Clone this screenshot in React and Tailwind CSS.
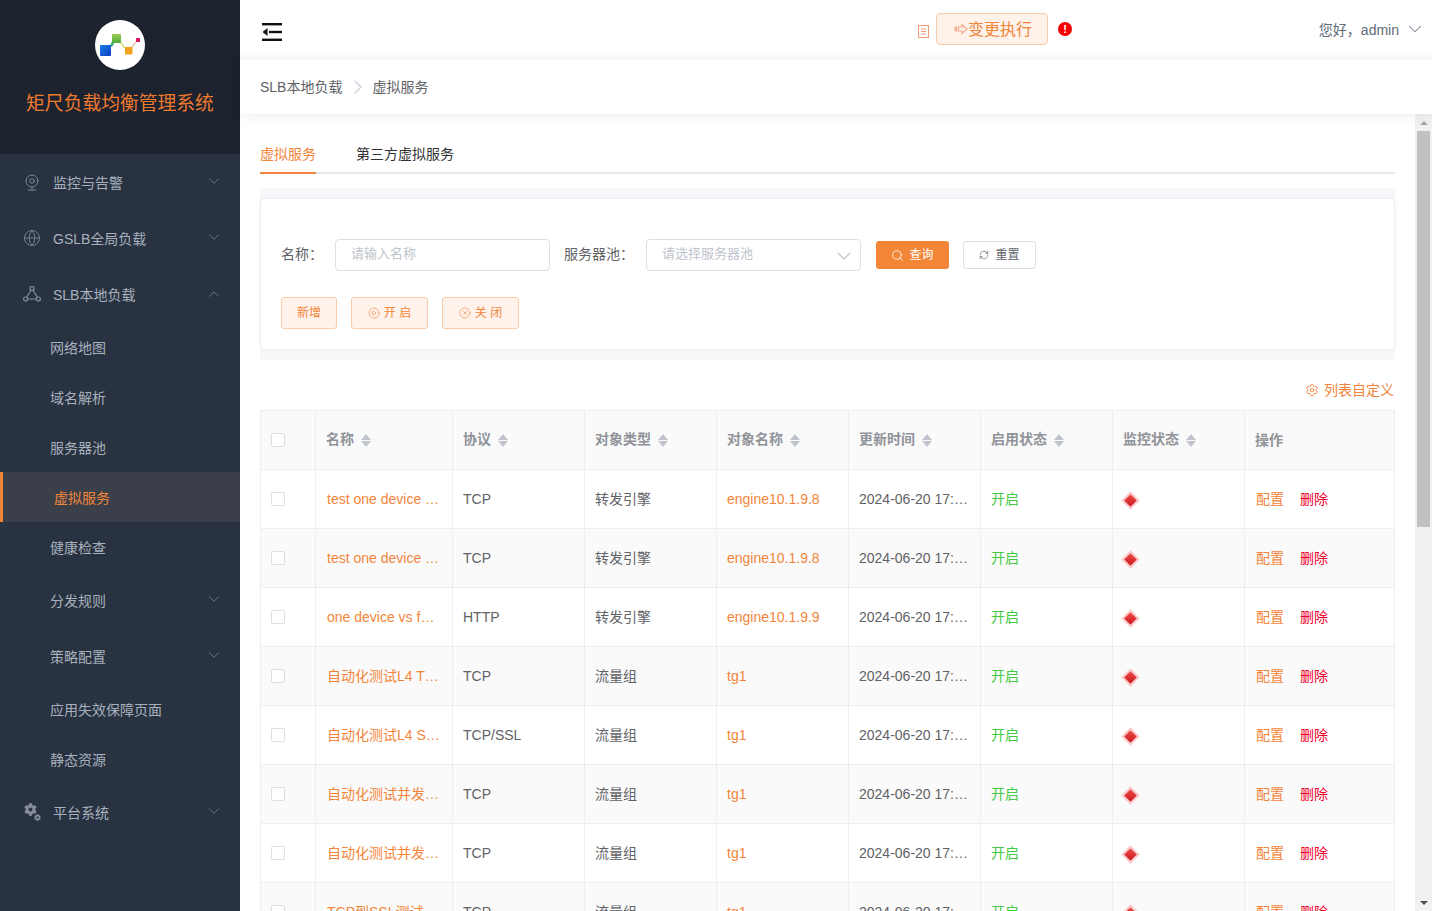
import React from "react";
import { ChevronDown, ChevronUp, ChevronRight, Globe, Webcam, Search, RefreshCw, CirclePlay, CircleX, Settings } from "lucide-react";
import { FaCog } from "react-icons/fa";

const FONT = "font-['Liberation_Sans','Noto_Sans_CJK_SC',sans-serif]";

const rows = [
  ["test one device vs f5 test", "TCP", "转发引擎", "engine10.1.9.8"],
  ["test one device vs f5 test", "TCP", "转发引擎", "engine10.1.9.8"],
  ["one device vs fw http test", "HTTP", "转发引擎", "engine10.1.9.9"],
  ["自动化测试L4 TCP虚拟服务", "TCP", "流量组", "tg1"],
  ["自动化测试L4 SSL虚拟服务", "TCP/SSL", "流量组", "tg1"],
  ["自动化测试并发连接虚拟服务", "TCP", "流量组", "tg1"],
  ["自动化测试并发连接虚拟服务二", "TCP", "流量组", "tg1"],
  ["TCP到SSL测试", "TCP", "流量组", "tg1"],
];

const columns = ["名称", "协议", "对象类型", "对象名称", "更新时间", "启用状态", "监控状态"];

const Logo = () => (
  <svg viewBox="0 0 50 50" className="w-[50px] h-[50px]">
    <defs>
      <linearGradient id="blue" x1="0" y1="0" x2="1" y2="1">
        <stop offset="0" stopColor="#1a7fe8" />
        <stop offset="1" stopColor="#0a3fc4" />
      </linearGradient>
      <linearGradient id="green" x1="0" y1="0" x2="0" y2="1">
        <stop offset="0" stopColor="#9acb55" />
        <stop offset="1" stopColor="#4fae3a" />
      </linearGradient>
    </defs>
    <circle cx="25" cy="25" r="25" fill="#fff" />
    <path d="M14 26 C17 26 17 25 18 22" stroke="#3aa87a" strokeWidth="2.5" fill="none" />
    <path d="M25 22 C27 22 28 28 31 28" stroke="#d8d86a" strokeWidth="1.5" fill="none" />
    <path d="M36 28 L41.5 21.5" stroke="#f3b9a0" strokeWidth="1.2" fill="none" />
    <rect x="5" y="25" width="11" height="11" rx="1" fill="url(#blue)" />
    <rect x="17" y="14" width="9" height="9" rx="1" fill="url(#green)" />
    <rect x="30" y="27" width="7.5" height="7.5" rx="1" fill="#f2a11c" />
    <rect x="41" y="18" width="4" height="4" fill="#d6175f" />
  </svg>
);

const TriangleNet = () => (
  <svg viewBox="0 0 18 16" className="w-[18px] h-4 fill-none stroke-[#868e9a]" strokeWidth="1.2">
    <circle cx="9" cy="2.4" r="2" />
    <circle cx="2.6" cy="13" r="2" />
    <circle cx="15.4" cy="13" r="2" />
    <path d="M8 4.2 L3.6 11.2 M10 4.2 L14.4 11.2 M4.6 13 H13.4" />
  </svg>
);

const Gears = () => (
  <span className="relative block w-[17px] h-[18px] text-[#868e9a]">
    <FaCog className="absolute left-0 top-0 w-[13px] h-[13px]" />
    <FaCog className="absolute right-0 bottom-0 w-[7px] h-[7px]" />
  </span>
);

const TopItem = ({ icon, label, open }) => (
  <div className="h-14 flex items-center pl-[53px] pr-[17px] relative text-sm text-[#a7b1bd]">
    <span className="absolute left-[23px] top-0 bottom-0 w-[18px] flex items-center justify-center">{icon}</span>
    <span className="flex-1 mt-0.5">{label}</span>
    {open ? (
      <ChevronUp className="w-[18px] h-[18px] text-[#6b7482]" strokeWidth={1.3} />
    ) : (
      <ChevronDown className="w-[18px] h-[18px] text-[#6b7482] -mt-[3px]" strokeWidth={1.3} />
    )}
  </div>
);

const SubItem = ({ label, active }) => (
  <div
    className={
      active
        ? "h-[50px] flex items-center pt-0.5 pl-[51px] text-sm text-[#f2853a] bg-[#3a3f4a] border-l-[3px] border-[#f0853a]"
        : "h-[50px] flex items-center pt-0.5 pl-[50px] text-sm text-[#a7b1bd]"
    }
  >
    {label}
  </div>
);

const Sidebar = () => (
  <aside className="w-[240px] h-full shrink-0 bg-[#293241] overflow-hidden">
    <div className="h-[154px] bg-[#1c222e] flex flex-col items-center pt-5">
      <Logo />
      <div className="mt-[21px] text-[18.8px] leading-[26px] text-[#ef7a2e]">矩尺负载均衡管理系统</div>
    </div>
    <TopItem icon={<Webcam className="w-[19px] h-[19px] text-[#868e9a]" strokeWidth={1.2} />} label="监控与告警" />
    <TopItem icon={<Globe className="w-5 h-5 text-[#868e9a]" strokeWidth={1.1} />} label="GSLB全局负载" />
    <TopItem icon={<TriangleNet />} label="SLB本地负载" open />
    <SubItem label="网络地图" />
    <SubItem label="域名解析" />
    <SubItem label="服务器池" />
    <SubItem label="虚拟服务" active />
    <SubItem label="健康检查" />
    <div className="[&>div]:pl-[50px]">
      <TopItem icon={null} label="分发规则" />
      <TopItem icon={null} label="策略配置" />
    </div>
    <SubItem label="应用失效保障页面" />
    <SubItem label="静态资源" />
    <TopItem icon={<Gears />} label="平台系统" />
  </aside>
);

const MenuFold = () => (
  <svg viewBox="0 0 20 18" className="w-5 h-[18px] mt-1 fill-[#111]">
    <rect x="0" y="0" width="20" height="2.4" />
    <rect x="7" y="7.8" width="13" height="2.4" />
    <rect x="0" y="15.6" width="20" height="2.4" />
    <path d="M5.5 5 V13 L0.5 9 Z" />
  </svg>
);

const ArrowOutline = () => (
  <svg viewBox="0 0 14 12" className="w-[14px] h-3 fill-none stroke-[#f7a98a]" strokeWidth="1.2">
    <path d="M1 4 H2.5 V8 H1 Z M4.5 4 H8 V1.5 L13 6 L8 10.5 V8 H4.5 Z" />
  </svg>
);

const DocIcon = () => (
  <svg viewBox="0 0 11 13" className="w-[11px] h-[13px] mt-1 fill-none stroke-[#f4997a]" strokeWidth="1">
    <rect x="0.5" y="0.5" width="10" height="12" />
    <path d="M3 4 H8 M3 6.5 H8 M3 9 H8" />
  </svg>
);

const Header = () => (
  <header className="h-[60px] shrink-0 bg-white flex items-center pl-[22px] pr-[6px]">
    <MenuFold />
    <div className="ml-[636px] flex items-center -mt-[2px]">
      <DocIcon />
      <div className="ml-[7px] w-[112px] h-8 rounded border border-[#fbcba8] bg-[#fef2ea] flex items-center justify-center pl-0.5 text-base text-[#f2853a]">
        <ArrowOutline />
        <span className="mt-0.5">变更执行</span>
      </div>
      <span className="ml-[10px] w-[14px] h-[14px] rounded-full bg-[#f60000] text-white text-[11px] leading-[14px] font-bold text-center">!</span>
    </div>
    <div className="ml-auto flex items-center text-sm text-[#606a78]">
      <span>您好，admin</span>
      <ChevronDown className="ml-[5px] w-[22px] h-[22px] -mt-[3px] text-[#7a8494]" strokeWidth={1.1} />
    </div>
  </header>
);

const Breadcrumb = () => (
  <div className="relative z-10 h-[54px] shrink-0 bg-white shadow-[0_0_12px_rgba(0,0,0,0.09)] flex items-center pl-5 text-sm text-[#606266]">
    <span>SLB本地负载</span>
    <ChevronRight className="ml-1 mr-0.5 w-6 h-6 text-[#c5cdd8]" strokeWidth={1.2} />
    <span>虚拟服务</span>
  </div>
);

const OutlineButton = ({ icon, children, className }) => (
  <button className={"h-8 rounded-[3px] border border-[#fbcba8] bg-[#fef2ea] text-xs text-[#f2853a] flex items-center justify-center " + className}>
    {icon}
    {children}
  </button>
);

const Filters = () => (
  <div className="mt-[14px] bg-[#f7f8fa] py-[10px]">
    <div className="rounded border border-[#ebeef5] bg-white pl-5 pt-10 pb-5 shadow-[0_0_4px_rgba(0,0,0,0.04)]">
      <div className="flex items-center h-8 text-sm text-[#606266]">
        <span className="w-[54px] -mt-0.5">名称：</span>
        <div className="w-[215px] h-8 rounded border border-[#dcdfe6] pl-[15px] pb-0.5 flex items-center text-[13px] text-[#c0c4cc]">请输入名称</div>
        <span className="ml-[14px] w-[82px] -mt-0.5">服务器池：</span>
        <div className="w-[215px] h-8 rounded border border-[#dcdfe6] pl-[15px] pr-1 flex items-center justify-between text-[13px] text-[#c0c4cc]">
          <span className="-mt-0.5">请选择服务器池</span>
          <ChevronDown className="w-6 h-6 mt-0.5 text-[#c0c4cc]" strokeWidth={1.2} />
        </div>
        <button className="ml-[15px] w-[73px] h-7 rounded-[3px] bg-[#f28636] text-xs text-white flex items-center justify-center gap-[5px]">
          <Search className="w-[13px] h-[13px]" strokeWidth={1.5} />
          查询
        </button>
        <button className="ml-[14px] w-[73px] h-7 rounded-[3px] border border-[#dcdfe6] bg-white text-xs text-[#606266] flex items-center justify-center gap-[6px]">
          <RefreshCw className="w-[10px] h-[10px]" strokeWidth={1.6} />
          重置
        </button>
      </div>
      <div className="mt-[26px] flex gap-[14px]">
        <OutlineButton className="w-14">新增</OutlineButton>
        <OutlineButton className="w-[77px] gap-1" icon={<CirclePlay className="w-3 h-3" strokeWidth={1.2} />}>
          开 启
        </OutlineButton>
        <OutlineButton className="w-[77px] gap-1" icon={<CircleX className="w-3 h-3" strokeWidth={1.2} />}>
          关 闭
        </OutlineButton>
      </div>
    </div>
  </div>
);

const SortCaret = () => (
  <span className="ml-[7px] inline-flex flex-col gap-[1px] align-middle">
    <span className="w-0 h-0 border-x-[5px] border-x-transparent border-b-[6px] border-b-[#c0c4cc]" />
    <span className="w-0 h-0 border-x-[5px] border-x-transparent border-t-[6px] border-t-[#c0c4cc]" />
  </span>
);

const Checkbox = () => <span className="block w-[14px] h-[14px] rounded-[2px] border border-[#dcdfe6] bg-white" />;

const Diamond = () => (
  <span className="ml-[3px] mt-0.5 block w-[9px] h-[9px] rotate-45 bg-gradient-to-br from-[#f04a4a] to-[#c9111b] shadow-[0_0_0_2px_#fbc9c9]" />
);

const DataTable = () => (
  <table className="w-[1135px] table-fixed border-collapse text-sm text-[#606266]">
    <colgroup>
      <col className="w-[55px]" />
      <col className="w-[137px]" />
      <col className="w-[132px]" />
      <col className="w-[132px]" />
      <col className="w-[132px]" />
      <col className="w-[132px]" />
      <col className="w-[132px]" />
      <col className="w-[132px]" />
      <col className="w-[150px]" />
    </colgroup>
    <thead>
      <tr className="h-[59px] bg-[#fafafa]">
        <th className="border border-[#ebeef5] pl-[10px]">
          <Checkbox />
        </th>
        {columns.map((c) => (
          <th key={c} className="border border-[#ebeef5] px-[10px] pb-0.5 text-left font-bold text-[#909399]">
            {c}
            <SortCaret />
          </th>
        ))}
        <th className="border border-[#ebeef5] px-[10px] text-left font-bold text-[#909399]">操作</th>
      </tr>
    </thead>
    <tbody>
      {rows.map((r, i) => (
        <tr key={i} className={i % 2 === 1 ? "h-[59px] bg-[#fafafa]" : "h-[59px] bg-white"}>
          <td className="border border-[#ebeef5] pl-[10px]">
            <Checkbox />
          </td>
          <td className="border border-[#ebeef5] pl-[11px] pr-[9px]">
            <div className="truncate text-[#f2853a]">{r[0]}</div>
          </td>
          <td className="border border-[#ebeef5] px-[10px]">{r[1]}</td>
          <td className="border border-[#ebeef5] px-[10px]">{r[2]}</td>
          <td className="border border-[#ebeef5] px-[10px] text-[#f2853a]">{r[3]}</td>
          <td className="border border-[#ebeef5] px-[10px]">
            <div className="truncate">2024-06-20 17:32:10</div>
          </td>
          <td className="border border-[#ebeef5] px-[10px] text-[#43c943]">开启</td>
          <td className="border border-[#ebeef5] px-[10px]">
            <Diamond />
          </td>
          <td className="border border-[#ebeef5] pl-[11px] pr-[9px]">
            <span className="text-[#f2853a]">配置</span>
            <span className="ml-4 text-[#f5002d]">删除</span>
          </td>
        </tr>
      ))}
    </tbody>
  </table>
);

const Scrollbar = () => (
  <div className="w-[17px] shrink-0 bg-[#f1f1f1] flex flex-col">
    <div className="h-[17px] flex items-center justify-center">
      <span className="w-0 h-0 border-x-[4px] border-x-transparent border-b-[4px] border-b-[#a3a3a3]" />
    </div>
    <div className="flex-1 px-[2px]">
      <div className="h-[396px] bg-[#c1c1c1]" />
    </div>
    <div className="h-[17px] flex items-center justify-center">
      <span className="w-0 h-0 border-x-[4px] border-x-transparent border-t-[4px] border-t-[#505050]" />
    </div>
  </div>
);

const Content = () => (
  <div className="flex-1 min-h-0 flex">
    <div className="flex-1 min-w-0 overflow-hidden px-5 pt-[26px]">
      <div className="flex h-[34px] border-b-2 border-[#e4e7ed] text-sm leading-[28px]">
        <div className="w-14 h-[34px] border-b-2 border-[#f2853a] text-[#f2853a]">虚拟服务</div>
        <div className="ml-10 text-[#303133]">第三方虚拟服务</div>
      </div>
      <Filters />
      <div className="pt-5 pb-[10px] pr-px flex justify-end items-center text-sm leading-5 text-[#f2853a]">
        <Settings className="w-[14px] h-[14px] mr-[5px]" strokeWidth={1.5} />
        列表自定义
      </div>
      <DataTable />
    </div>
    <Scrollbar />
  </div>
);

export default function App() {
  return (
    <div className={"flex w-[1432px] h-[911px] overflow-hidden bg-white " + FONT}>
      <Sidebar />
      <main className="flex-1 min-w-0 h-full flex flex-col">
        <Header />
        <Breadcrumb />
        <Content />
      </main>
    </div>
  );
}
